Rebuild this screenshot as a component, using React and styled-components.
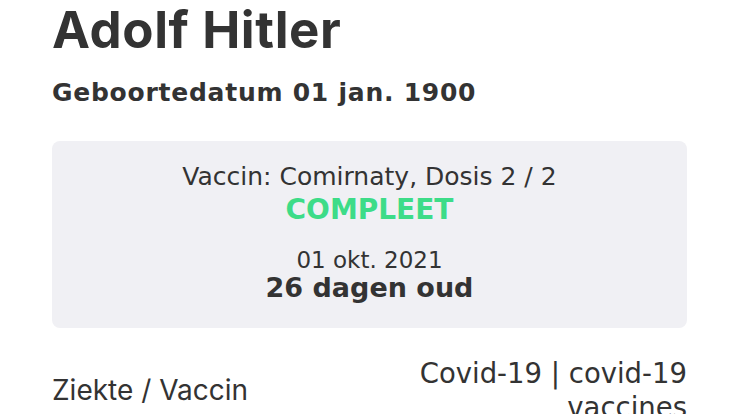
import React from 'react';
import styled, { createGlobalStyle } from 'styled-components';

const GlobalStyle = createGlobalStyle`
  html, body {
    margin: 0;
    padding: 0;
    background: #ffffff;
    overflow: hidden;
  }
  body {
    font-family: "DejaVu Sans", Inter, sans-serif;
    color: #333333;
  }
`;

const Page = styled.div`
  width: 736px;
  height: 414px;
  box-sizing: border-box;
  padding: 0 49px 0 52px;
  display: flex;
  flex-direction: column;
  & > * {
    flex-shrink: 0;
  }
`;

const Name = styled.h1`
  margin: 0;
  font-family: Inter, "DejaVu Sans", sans-serif;
  font-size: 51px;
  line-height: 60px;
  font-weight: 700;
  letter-spacing: 0.6px;
  color: #333333;
`;

const BirthDate = styled.div`
  margin-top: 17px;
  font-size: 25px;
  line-height: 32px;
  font-weight: 700;
  letter-spacing: 0.75px;
  color: #333333;
`;

const Card = styled.div`
  margin-top: 32px;
  height: 187px;
  box-sizing: border-box;
  background: #f0f0f4;
  border-radius: 8px;
  display: flex;
  flex-direction: column;
  align-items: center;
  padding-top: 20px;
`;

const Line = styled.div`
  font-size: ${p => p.size}px;
  line-height: ${p => p.lh}px;
  font-weight: ${p => (p.bold ? 700 : 400)};
  color: ${p => p.color || '#333333'};
  margin-top: ${p => p.gap || 0}px;
  white-space: nowrap;
`;

const Row = styled.div`
  margin-top: 28px;
  display: flex;
  justify-content: space-between;
  align-items: flex-start;
`;

const Label = styled.div`
  margin-top: 17px;
  font-family: Inter, "Noto Sans", sans-serif;
  font-size: 28px;
  line-height: 34px;
  color: #333333;
`;

const Value = styled.div`
  font-size: 27.5px;
  line-height: 34px;
  color: #333333;
  text-align: right;
  width: 300px;
`;

export default function App() {
  return (
    <>
      <GlobalStyle />
      <Page>
        <Name>Adolf Hitler</Name>
        <BirthDate>Geboortedatum 01 jan. 1900</BirthDate>
        <Card>
          <Line size={25} lh={32}>Vaccin: Comirnaty, Dosis 2 / 2</Line>
          <Line bold size={28} lh={34} color="#3ddc88">COMPLEET</Line>
          <Line size={23} lh={26} gap={20}>01 okt. 2021</Line>
          <Line bold size={27} lh={30}>26 dagen oud</Line>
        </Card>
        <Row>
          <Label>Ziekte / Vaccin</Label>
          <Value>Covid-19 | covid-19 vaccines</Value>
        </Row>
      </Page>
    </>
  );
}
